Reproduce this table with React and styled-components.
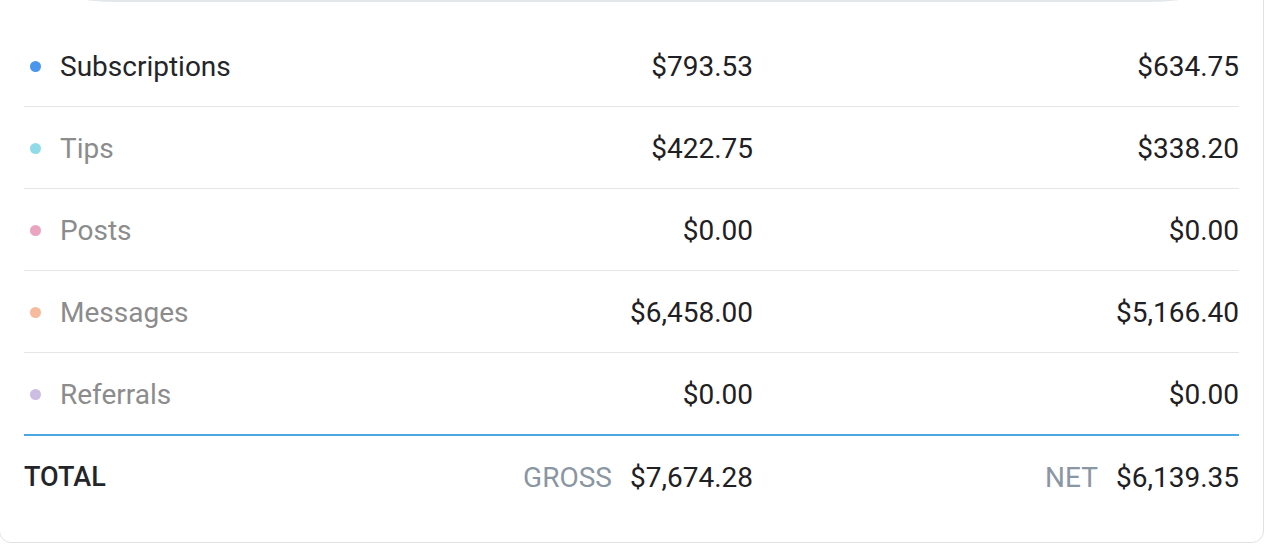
import React from 'react';
import styled, { createGlobalStyle } from 'styled-components';

const GlobalStyle = createGlobalStyle`
  html, body {
    margin: 0;
    padding: 0;
    background: #ffffff;
    overflow: hidden;
  }
  body {
    font-family: Roboto, "Liberation Sans", Arial, sans-serif;
    -webkit-font-smoothing: antialiased;
  }
`;

const Card = styled.section`
  box-sizing: border-box;
  width: 1265px;
  margin: -20px 0 0 -1px;
  padding: 0 24px 24px;
  background: #fff;
  border: 1px solid #dfe2e5;
  border-radius: 12px;
`;

const ChartEdge = styled.div`
  height: 19px;
  margin: 0 29px 25px 31px;
  border-radius: 0 0 60px 60px / 0 0 16px 16px;
  box-shadow: 0 2px 0 #e4e7ea;
`;

const Row = styled.div`
  display: grid;
  grid-template-columns: 2fr 1fr 2fr;
  align-items: center;
  padding-top: 2px;
  height: 79px;
  border-bottom: ${({ $last }) => ($last ? '2px solid #4aa8e3' : '1px solid #e4e6e9')};
  font-size: 28px;
`;

const TotalRow = styled(Row)`
  padding-top: 0;
  height: 82px;
  border-bottom: none;
`;

const Label = styled.div`
  display: flex;
  align-items: center;
  gap: 19px;
  padding-left: 6px;
  color: ${({ $active }) => ($active ? '#242529' : '#8c8c8c')};
`;

const Dot = styled.span`
  width: 11px;
  height: 11px;
  border-radius: 50%;
  background: ${({ $color }) => $color};
  flex-shrink: 0;
`;

const Amount = styled.div`
  display: flex;
  justify-content: flex-end;
  align-items: baseline;
  gap: 18px;
  color: #1f2023;
`;

const TotalLabel = styled.div`
  color: #242529;
  font-weight: 500;
  font-size: 27px;
`;

const Caption = styled.span`
  color: #8a96a3;
  font-size: 28px;
`;

const rows = [
  { name: 'Subscriptions', color: '#4a96ec', gross: '$793.53', net: '$634.75', active: true },
  { name: 'Tips', color: '#8fdbe9', gross: '$422.75', net: '$338.20' },
  { name: 'Posts', color: '#eaa4bf', gross: '$0.00', net: '$0.00' },
  { name: 'Messages', color: '#f6ba9c', gross: '$6,458.00', net: '$5,166.40' },
  { name: 'Referrals', color: '#cdbde2', gross: '$0.00', net: '$0.00' },
];

export default function App() {
  return (
    <>
      <GlobalStyle />
      <Card>
        <ChartEdge />
        {rows.map((r, i) => (
          <Row key={r.name} $last={i === rows.length - 1}>
            <Label $active={r.active}>
              <Dot $color={r.color} />
              {r.name}
            </Label>
            <Amount>{r.gross}</Amount>
            <Amount>{r.net}</Amount>
          </Row>
        ))}
        <TotalRow>
          <TotalLabel>TOTAL</TotalLabel>
          <Amount>
            <Caption>GROSS</Caption>
            $7,674.28
          </Amount>
          <Amount>
            <Caption>NET</Caption>
            $6,139.35
          </Amount>
        </TotalRow>
      </Card>
    </>
  );
}
